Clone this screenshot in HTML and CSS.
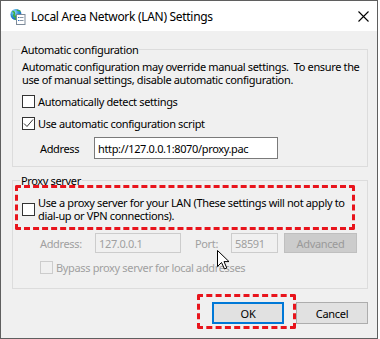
FILE: index.html
```html
<!DOCTYPE html>
<html>
<head>
<meta charset="utf-8">
<link rel="stylesheet" href="styles.css">
</head>
<body>
<div class="window">
  <div class="titlebar">
    <svg class="appicon" width="16" height="18" viewBox="0 0 16 18">
      <defs>
        <radialGradient id="g" cx="0.35" cy="0.3" r="0.8">
          <stop offset="0" stop-color="#9fe0ff"/>
          <stop offset="0.5" stop-color="#2a8ed8"/>
          <stop offset="1" stop-color="#1a5aa8"/>
        </radialGradient>
      </defs>
      <circle cx="6" cy="6.5" r="5.5" fill="url(#g)"/>
      <path d="M2.5 4 C4 3 5 5 4 6.5 C3 8 5 9 6 8.5 C7 10 6 11 5.5 12" fill="none" stroke="#3fae3a" stroke-width="1.6"/>
      <path d="M7 2 C8.5 3 9.5 2.5 10.5 3.5" fill="none" stroke="#3fae3a" stroke-width="1.3"/>
      <rect x="6.5" y="6.5" width="8.5" height="10" fill="#fff" stroke="#7d8a99"/>
      <rect x="8" y="9" width="1.5" height="1" fill="#3a76c4"/>
      <rect x="10" y="9" width="3.5" height="1" fill="#8a96a4"/>
      <rect x="8" y="12" width="1.5" height="1" fill="#3a76c4"/>
      <rect x="10" y="12" width="3.5" height="1" fill="#8a96a4"/>
    </svg>
    <span class="title">Local Area Network (LAN) Settings</span>
    <svg class="close" width="11" height="11" viewBox="0 0 11 11">
      <path d="M0.5 0.5 L10.5 10.5 M10.5 0.5 L0.5 10.5" stroke="#000" stroke-width="1.1"/>
    </svg>
  </div>
  <div class="content">
    <fieldset class="group group-auto">
      <legend>Automatic configuration</legend>
      <div class="group-body">
        <p class="desc">Automatic configuration may override manual settings.&nbsp; To ensure the<br>use of manual settings, disable automatic configuration.</p>
        <div class="check-row row-detect">
          <span class="box"></span>
          <span>Automatically detect settings</span>
        </div>
        <div class="check-row row-script">
          <span class="box">
            <svg width="11" height="11" viewBox="0 0 11 11"><path d="M1 5.5 L4 8.5 L10 1.5" fill="none" stroke="#333" stroke-width="1"/></svg>
          </span>
          <span>Use automatic configuration script</span>
        </div>
        <div class="addr-row">
          <span class="addr-label">Address</span>
          <span class="input url">http://127.0.0.1:8070/proxy.pac</span>
        </div>
      </div>
    </fieldset>
    <fieldset class="group group-proxy">
      <legend>Proxy server</legend>
      <div class="group-body proxy-body">
        <div class="mark proxy-mark">
          <span class="box"></span>
          <span class="proxy-text">Use a proxy server for your LAN (These settings will not apply to<br>dial-up or VPN connections).</span>
        </div>
        <div class="proxy-row">
          <span class="dis addr2">Address:</span>
          <span class="input disabled ip">127.0.0.1</span>
          <span class="dis port">Port:</span>
          <span class="input disabled portin">58591</span>
          <span class="adv">Advanced</span>
        </div>
        <div class="check-row bypass">
          <span class="box dbox"></span>
          <span class="dis">Bypass proxy server for local addresses</span>
        </div>
        <svg class="cursor" width="13" height="20" viewBox="0 0 13 20">
          <path d="M0.5 0.5 L0.5 16.5 L4.5 12.5 L7.5 19 L9.8 18 L7 11.6 L12 11.6 Z" fill="#fff" stroke="#000" stroke-width="1"/>
        </svg>
      </div>
    </fieldset>
    <div class="buttons">
      <div class="mark ok-mark"><button class="btn ok">OK</button></div>
      <button class="btn cancel">Cancel</button>
    </div>
  </div>
</div>
</body>
</html>
```
FILE: styles.css
```css
* { box-sizing: border-box; }
html, body { margin: 0; padding: 0; background: #fff; }
body {
  font-family: "Noto Sans", "Open Sans", sans-serif;
  font-size: 11px;
  letter-spacing: -0.35px;
  line-height: 13px;
  color: #000;
  white-space: nowrap;
}
.window {
  width: 378px;
  height: 339px;
  border: 1px solid #5f5f5f;
  display: flex;
  flex-direction: column;
  background: #f0f0f0;
}
.titlebar {
  height: 30px;
  background: #fff;
  display: flex;
  align-items: center;
  padding-left: 9px;
}
.appicon { margin-top: 2px; }
.title { margin-left: 5px; font-size: 12px; letter-spacing: -0.3px; margin-top: 1px; }
.close { margin-left: auto; margin-right: 8px; }
.content {
  flex: 1;
  padding: 0 9px 0 11px;
  display: flex;
  flex-direction: column;
}
.group {
  margin: 0;
  padding: 0;
  border: 1px solid #dcdcdc;
  min-width: 0;
}
.group legend {
  padding: 0 1px;
  margin-left: 7px;
  line-height: 13px;
}
.group-auto { margin-top: 12px; }
.group-body { padding: 4px 0 7px 9px; position: relative; }
.desc { margin: 0; }
.check-row { display: flex; align-items: center; gap: 3px; height: 13px; }
.box {
  width: 13px; height: 13px;
  border: 1px solid #333;
  background: #fff;
  display: inline-flex;
  align-items: center;
  justify-content: center;
  flex: none;
}
.row-detect { margin-top: 9px; }
.row-script { margin-top: 9px; }
.addr-row { display: flex; align-items: center; margin-top: 7px; height: 22px; }
.addr-label { margin-left: 18px; width: 54px; }
.input {
  border: 1px solid #7a7a7a;
  background: #fff;
  height: 22px;
  display: flex;
  align-items: center;
  padding-left: 3px;
}
.url { width: 184px; }
.group-proxy { margin-top: 7px; }
.proxy-body { padding: 0 0 14px 2px; }
.mark { border: 3px dashed #e8141c; border-radius: 2px; }
.proxy-mark {
  margin-top: -2px;
  width: 340px;
  display: flex;
  align-items: center;
  gap: 3px;
  padding: 8px 4px 5px 4px;
}
.proxy-row { display: flex; align-items: center; height: 20px; margin-top: 3px; }
.dis { color: #a0a0a0; }
.addr2 { margin-left: 25px; width: 55px; }
.input.disabled { border-color: #cccccc; background: #f0f0f0; color: #a0a0a0; height: 20px; }
.ip { width: 86px; }
.port { margin-left: 14px; width: 36px; }
.portin { width: 47px; }
.adv {
  margin-left: 6px;
  width: 73px; height: 20px;
  background: #cccccc;
  border: 1px solid #bfbfbf;
  color: #9a9a9a;
  display: flex; align-items: center; justify-content: center;
}
.bypass { margin-top: 8px; padding-left: 25px; }
.dbox { border-color: #cccccc; background: #f0f0f0; }
.cursor { position: absolute; left: 204px; top: 65px; }
.buttons { display: flex; margin-top: 5px; padding-left: 185px; align-items: flex-start; }
.ok-mark { padding: 5px 9px 2px 12px; }
.btn {
  font-family: inherit; font-size: 11px; letter-spacing: -0.3px;
  height: 22px;
  background: #e1e1e1;
  border: 1px solid #adadad;
  padding: 0;
  color: #000;
  margin: 0;
}
.ok { width: 72px; border: 2px solid #0078d7; }
.cancel { width: 72px; margin-top: 8px; }
```
